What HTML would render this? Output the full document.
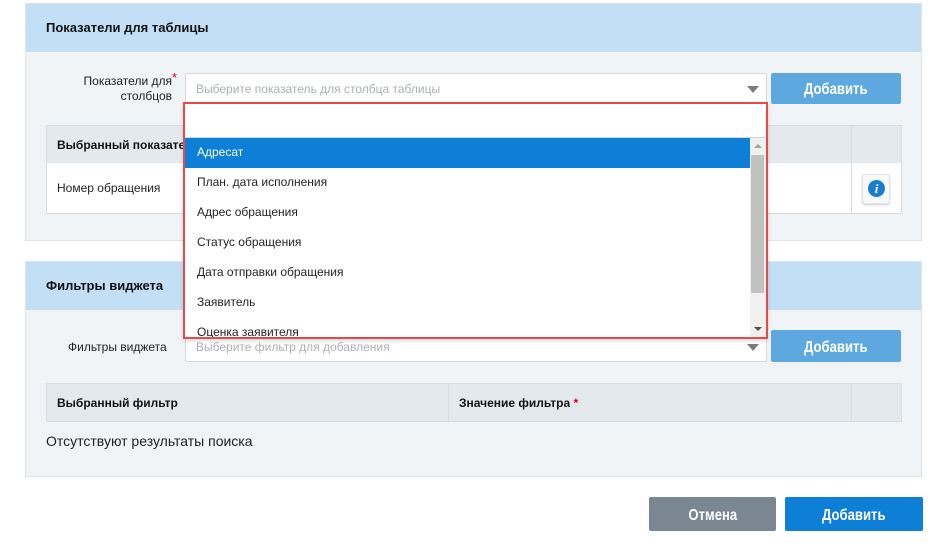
<!DOCTYPE html>
<html><head><meta charset="utf-8"><style>
*{margin:0;padding:0;box-sizing:border-box}
body{width:948px;height:555px;background:#fff;font-family:"Liberation Sans",sans-serif;font-size:12px;color:#222;position:relative;overflow:hidden}
.a{position:absolute}
.panel{position:absolute;left:25px;width:897px;background:#f0f4f7;border:1px solid #dde3e8}
.hdr{position:absolute;left:0;top:0;right:0;height:48px;background:#c2dff5;font-weight:bold;font-size:13px;padding:16px 0 0 20px;color:#111}
.sel{position:absolute;background:#fff;border:1px solid #d4d9dd;border-radius:2px;color:#aab0b5;font-size:12px;padding:8px 0 0 10px}
.tri{position:absolute;width:0;height:0;border-left:6px solid transparent;border-right:6px solid transparent;border-top:7px solid #7c7c7c}
.btn{position:absolute;color:#fff;font-size:16px;font-weight:bold;text-align:center;border-radius:2px}
.btn span{display:inline-block;transform:scaleX(0.82)}
.th{position:absolute;background:#e4e9ed;border:1px solid #d6dce1;font-weight:bold;color:#111}
.item{position:absolute;left:0;width:565px;height:30px;padding:7px 0 0 12px;color:#222}
</style></head><body>

<div class="panel" style="top:3px;height:238px">
 <div class="hdr">Показатели для таблицы</div>
</div>
<div class="a" style="left:60px;top:74px;width:112px;text-align:right;line-height:15px;color:#222">Показатели для<br>столбцов</div>
<div class="a" style="left:172px;top:70px;color:#d0021b;font-size:13px">*</div>
<div class="sel" style="left:185px;top:73px;width:582px;height:31px">Выберите показатель для столбца таблицы<div class="tri" style="left:561px;top:12px"></div></div>
<div class="btn" style="left:771px;top:73px;width:130px;height:31px;background:#5ea8e0;padding-top:8px"><span>Добавить</span></div>
<div class="th" style="left:46px;top:125px;width:806px;height:39px;padding:12px 0 0 10px">Выбранный показатель</div>
<div class="th" style="left:851px;top:125px;width:51px;height:39px"></div>
<div class="a" style="left:46px;top:163px;width:856px;height:51px;background:#fff;border:1px solid #d6dce1;border-top:none"></div>
<div class="a" style="left:851px;top:163px;width:1px;height:51px;background:#d6dce1"></div>
<div class="a" style="left:57px;top:181px">Номер обращения</div>
<div class="a" style="left:862px;top:174px;width:28px;height:30px;background:#f7fafc;border:1px solid #dfe3e6;border-radius:3px;box-shadow:0 1px 2px rgba(0,0,0,.2)">
 <div class="a" style="left:5px;top:5px;width:17px;height:17px;border-radius:50%;background:#1a7ccc;color:#fff;font:italic bold 13px 'Liberation Serif',serif;text-align:center;line-height:17px">i</div>
</div>

<div class="panel" style="top:261px;height:216px">
 <div class="hdr">Фильтры виджета</div>
</div>
<div class="a" style="left:68px;top:340px;color:#222">Фильтры виджета</div>
<div class="sel" style="left:185px;top:331px;width:582px;height:31px">Выберите фильтр для добавления<div class="tri" style="left:561px;top:12px"></div></div>
<div class="btn" style="left:771px;top:330px;width:130px;height:32px;background:#5ea8e0;padding-top:9px"><span>Добавить</span></div>
<div class="th" style="left:46px;top:383px;width:403px;height:39px;padding:12px 0 0 10px">Выбранный фильтр</div>
<div class="th" style="left:448px;top:383px;width:404px;height:39px;padding:12px 0 0 10px">Значение фильтра <span style="color:#d0021b">*</span></div>
<div class="th" style="left:851px;top:383px;width:51px;height:39px"></div>
<div class="a" style="left:46px;top:433px;font-size:14px;color:#222">Отсутствуют результаты поиска</div>

<div class="btn" style="left:649px;top:497px;width:127px;height:34px;background:#7a8691;padding-top:10px"><span>Отмена</span></div>
<div class="btn" style="left:785px;top:497px;width:138px;height:34px;background:#0e7fd6;padding-top:10px"><span>Добавить</span></div>

<div class="a" style="left:183px;top:102px;width:585px;height:237px;border:2px solid #e8484a;background:#fff;overflow:hidden;box-shadow:0 2px 4px rgba(0,0,0,.15)">
 <div class="a" style="left:0;top:33px;width:581px;height:1px;background:#cfd5da"></div>
 <div class="item" style="top:34px;background:#0e7fd6;color:#fff">Адресат</div>
 <div class="item" style="top:64px">План. дата исполнения</div>
 <div class="item" style="top:94px">Адрес обращения</div>
 <div class="item" style="top:124px">Статус обращения</div>
 <div class="item" style="top:154px">Дата отправки обращения</div>
 <div class="item" style="top:184px">Заявитель</div>
 <div class="item" style="top:214px">Оценка заявителя</div>
 <div class="a" style="left:565px;top:34px;width:16px;height:199px;background:#f0f0f0">
  <div class="a" style="left:4px;top:6px;width:0;height:0;border-left:4px solid transparent;border-right:4px solid transparent;border-bottom:4px solid #a3a3a3"></div>
  <div class="a" style="left:1px;top:17px;width:13px;height:138px;background:#c1c1c1"></div>
  <div class="a" style="left:4px;top:189px;width:0;height:0;border-left:4px solid transparent;border-right:4px solid transparent;border-top:4px solid #505050"></div>
 </div>
</div>
</body></html>
